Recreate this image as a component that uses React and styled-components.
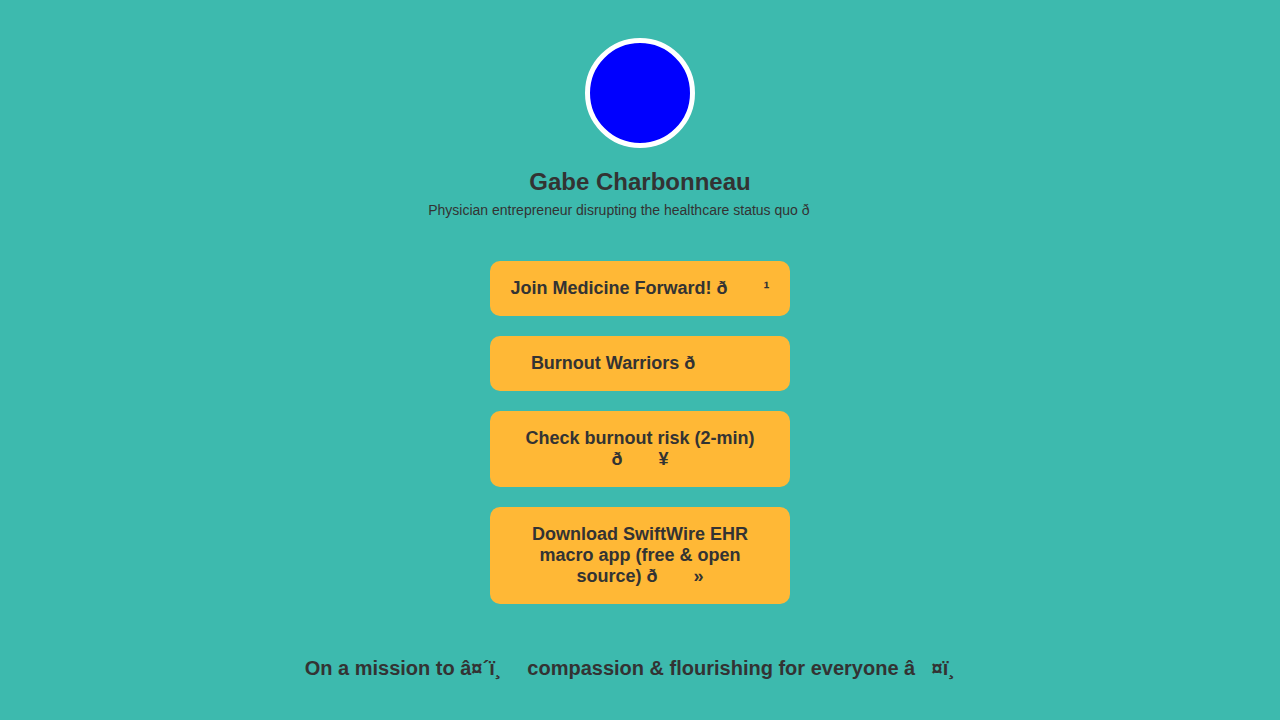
import React from 'react';
import styled, { createGlobalStyle } from 'styled-components';

const GlobalStyle = createGlobalStyle`
  html, body {
    margin: 0;
    padding: 0;
    background-color: #3dbaae;
  }
  body {
    font-family: "Liberation Sans", Arial, Helvetica, sans-serif;
    color: #333333;
  }
`;

const Page = styled.main`
  display: flex;
  flex-direction: column;
  align-items: center;
  min-height: 720px;
  padding-top: 38px;
  box-sizing: border-box;
`;

const Avatar = styled.div`
  width: 100px;
  height: 100px;
  border-radius: 50%;
  border: 5px solid #ffffff;
  background-color: #0000ff;
`;

const Name = styled.h1`
  margin: 20px 0 0;
  font-size: 24px;
  font-weight: 700;
  line-height: 28px;
  text-align: center;
`;

const Bio = styled.p`
  margin: 6px 0 0;
  font-size: 14px;
  line-height: 16px;
  text-align: center;
`;

const Links = styled.nav`
  display: flex;
  flex-direction: column;
  gap: 20px;
  margin-top: 43px;
  width: 300px;
`;

const LinkButton = styled.a`
  display: block;
  box-sizing: border-box;
  width: 100%;
  padding: 17px 20px;
  border-radius: 10px;
  background-color: #ffb836;
  color: #333333;
  font-size: 18px;
  font-weight: 700;
  line-height: 21px;
  text-align: center;
  text-decoration: none;
  cursor: pointer;
`;

const Mission = styled.p`
  margin: 52px 0 0;
  font-size: 20px;
  font-weight: 700;
  line-height: 24px;
  text-align: center;
`;

// the emoji bytes were read as latin-1, so the C1 control chars show as blanks
const Blank = styled.span`
  letter-spacing: 0.22em;
`;

const Garbled = ({ text }) =>
  text.split(/([\u0080-\u009f]+)/).map((part, i) =>
    i % 2 ? <Blank key={i}>{part}</Blank> : part
  );

const links = [
  'Join Medicine Forward! \u00f0\u009f\u0094\u00b9',
  'Burnout Warriors \u00f0\u009f\u0092\u008a',
  'Check burnout risk (2-min) \u00f0\u009f\u0094\u00a5',
  'Download SwiftWire EHR macro app (free & open source) \u00f0\u009f\u0092\u00bb',
];

export default function App() {
  return (
    <>
      <GlobalStyle />
      <Page>
        <Avatar />
        <Name>Gabe Charbonneau</Name>
        <Bio>
          <Garbled text={'Physician entrepreneur disrupting the healthcare status quo \u00f0\u009f\u009a\u0091'} />
        </Bio>
        <Links>
          {links.map((label) => (
            <LinkButton key={label}>
              <Garbled text={label} />
            </LinkButton>
          ))}
        </Links>
        <Mission>
          <Garbled
            text={'On a mission to \u00e2\u00a4\u00b4\u00ef\u00b8\u008f compassion & flourishing for everyone \u00e2\u009d\u00a4\u00ef\u00b8\u008f'}
          />
        </Mission>
      </Page>
    </>
  );
}
